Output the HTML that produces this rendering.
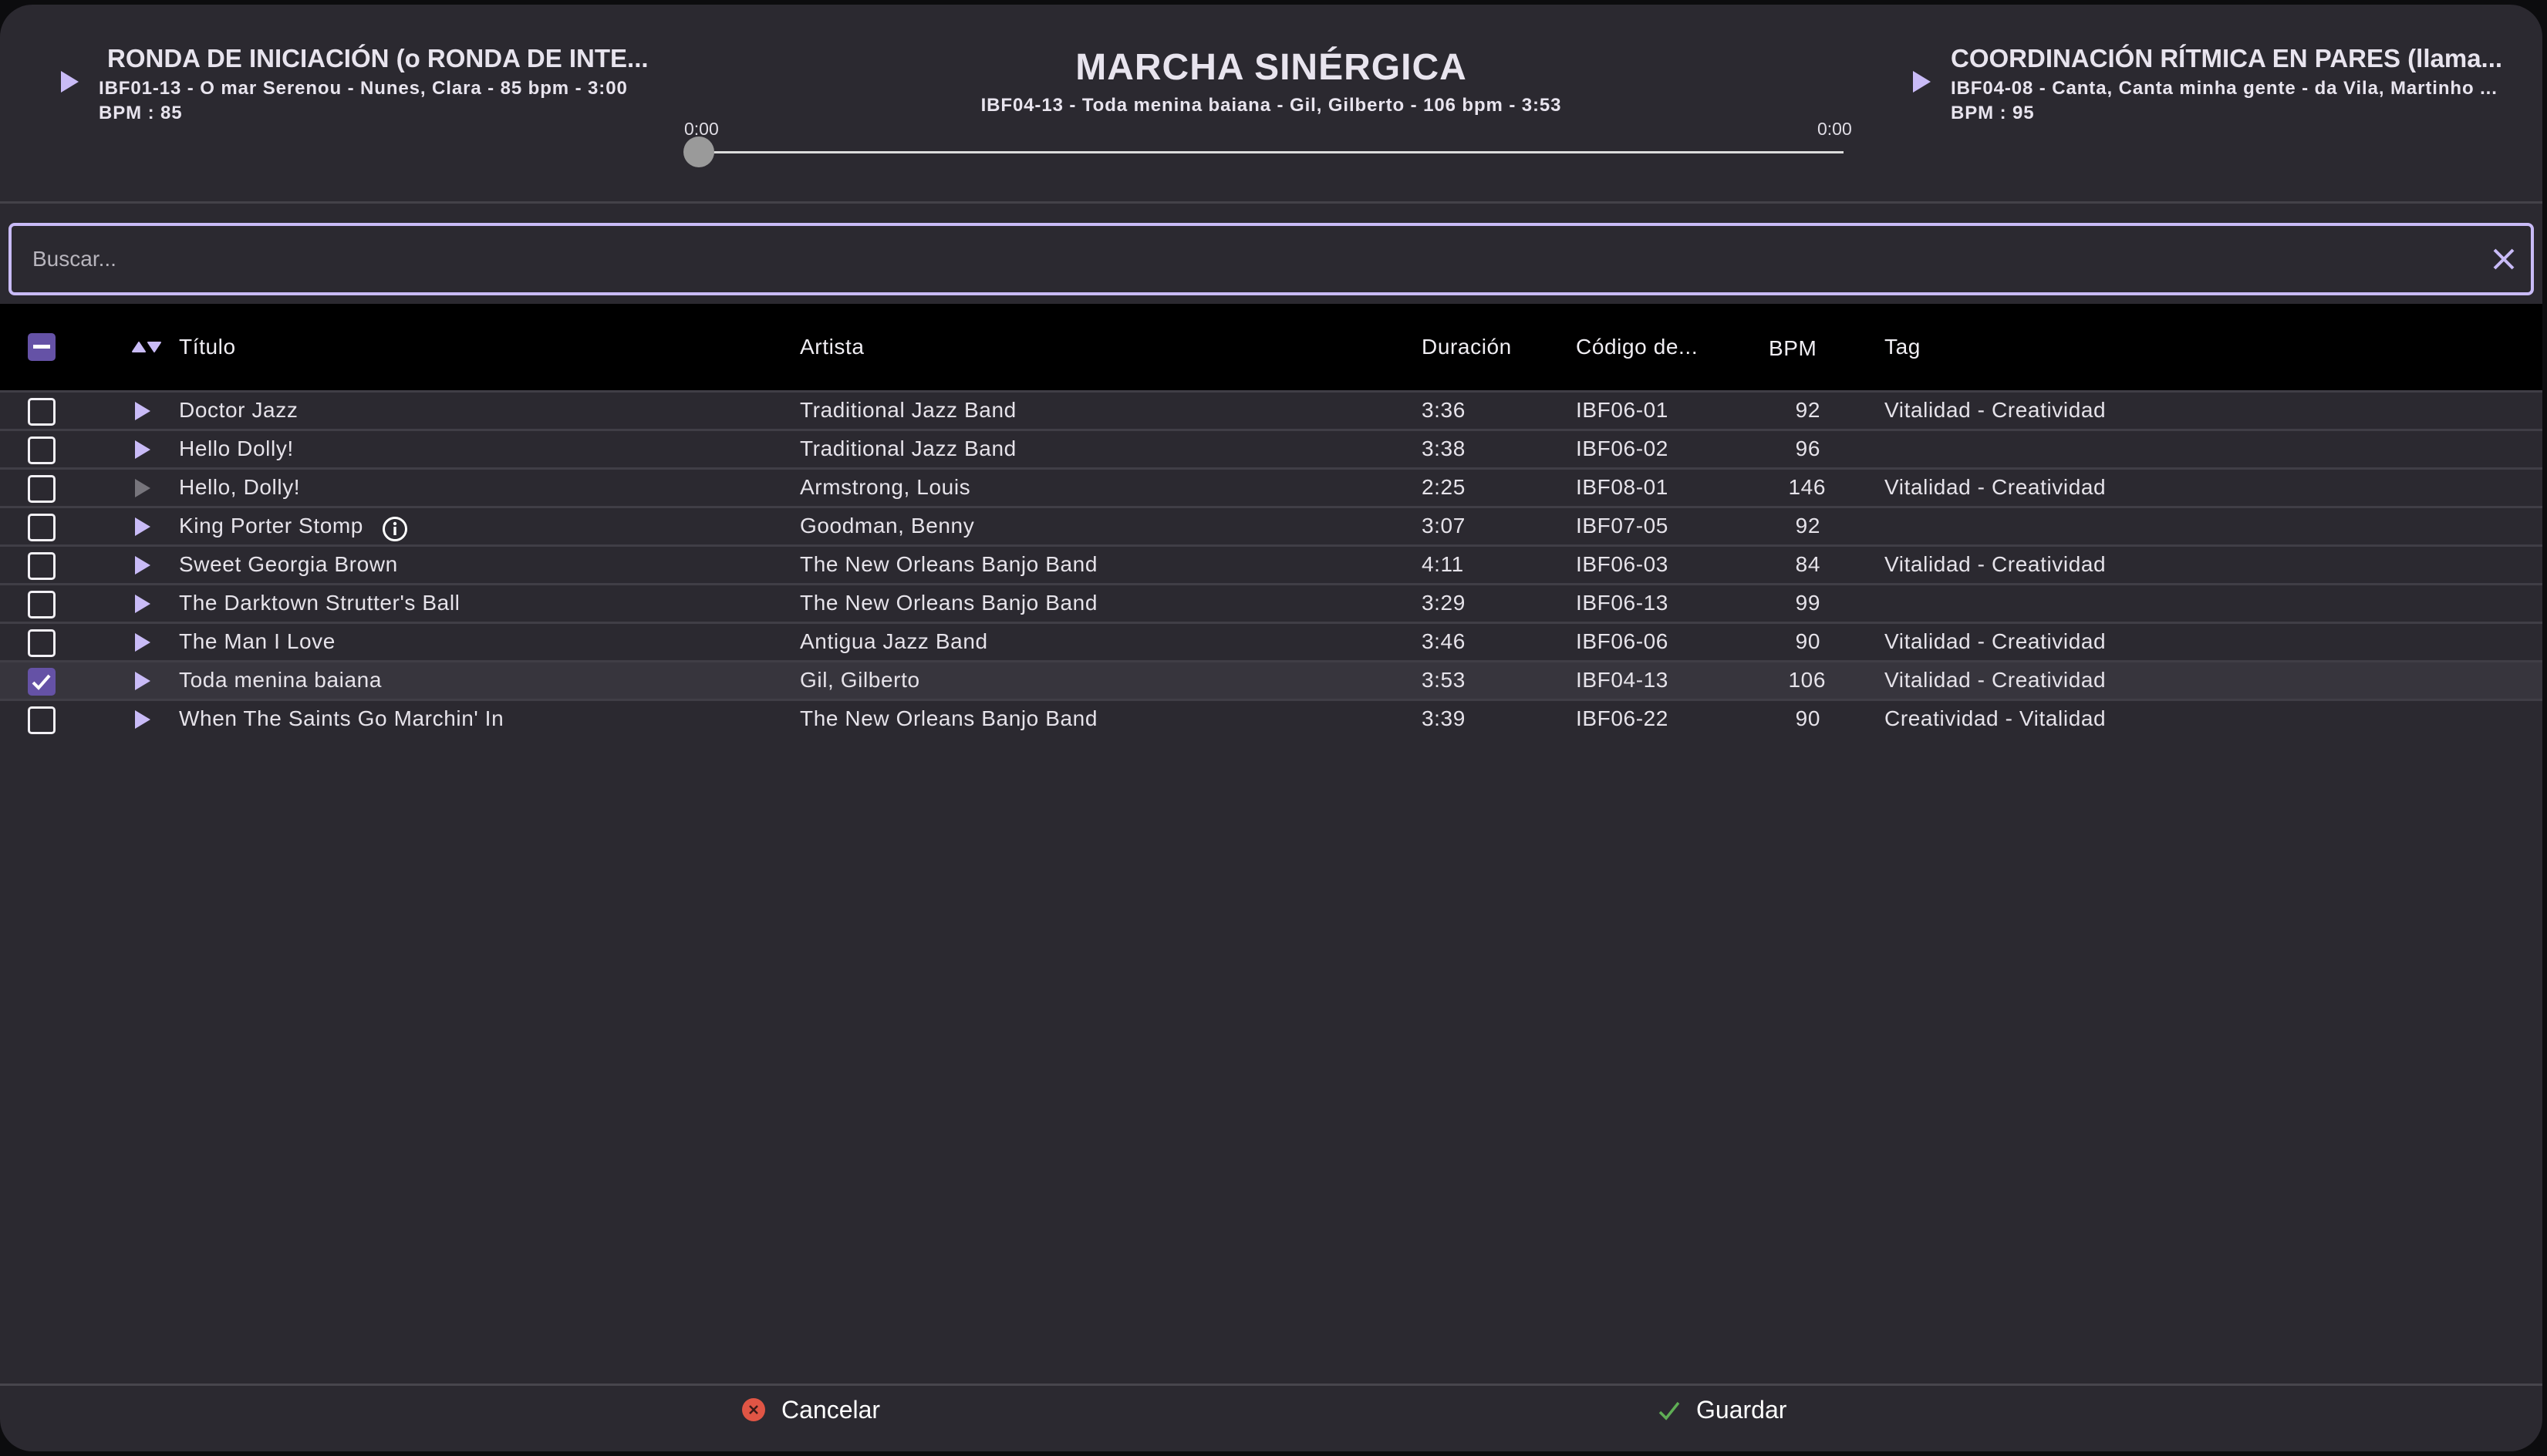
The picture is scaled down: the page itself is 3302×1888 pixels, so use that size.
<!DOCTYPE html>
<html><head><meta charset="utf-8"><style>
*{margin:0;padding:0;box-sizing:border-box}
body{width:3302px;height:1888px;background:#0c0c0e;font-family:"Liberation Sans",sans-serif;overflow:hidden;position:relative}
.modal{position:absolute;left:0;top:6px;width:3296px;height:1876px;background:#2b2930;border-radius:42px;overflow:hidden}
.abs{position:absolute;white-space:nowrap}
.h1{font-weight:bold;font-size:33px;color:#e8e4ee;letter-spacing:0px}
.h2{font-weight:bold;font-size:24px;color:#e8e4ee;letter-spacing:0.9px}
.tri{position:absolute;width:0;height:0;border-top:14px solid transparent;border-bottom:14px solid transparent;border-left:23px solid #c9bbf7}
.row{position:absolute;left:0;width:3296px;height:50px;border-bottom:3px solid #403e46;font-size:28px;color:#e6e3ea;letter-spacing:0.6px}
.row span{position:absolute;top:7px;white-space:nowrap}
.cb{position:absolute;left:36px;top:7px;width:36px;height:36px;border:3px solid #f2f0f5;border-radius:5px}
.pt{position:absolute;left:175px;top:12px;width:0;height:0;border-top:12px solid transparent;border-bottom:12px solid transparent;border-left:20px solid #c9bbf7}
.th{position:absolute;top:40px;font-size:28px;color:#f0eef3;white-space:nowrap;letter-spacing:0.6px}
</style></head><body>
<div class="modal">
  <div class="tri" style="left:79px;top:86px"></div>
  <div class="abs h1" style="left:139px;top:51px">RONDA DE INICIACIÓN (o RONDA DE INTE...</div>
  <div class="abs h2" style="left:128px;top:95px">IBF01-13 - O mar Serenou - Nunes, Clara - 85 bpm - 3:00</div>
  <div class="abs h2" style="left:128px;top:127px">BPM : 85</div>

  <div class="abs" style="left:0;width:3296px;top:54px;text-align:center;font-weight:bold;font-size:48px;color:#e8e4ee;letter-spacing:1px">MARCHA SINÉRGICA</div>
  <div class="abs h2" style="left:0;width:3296px;top:117px;text-align:center">IBF04-13 - Toda menina baiana - Gil, Gilberto - 106 bpm - 3:53</div>

  <div class="abs" style="left:887px;top:148px;font-size:23px;color:#e0dde5">0:00</div>
  <div class="abs" style="left:2356px;top:148px;font-size:23px;color:#e0dde5">0:00</div>
  <div class="abs" style="left:906px;top:190px;width:1484px;height:3px;background:#dcdcdc"></div>
  <div class="abs" style="left:886px;top:171px;width:40px;height:40px;border-radius:50%;background:#9a9a9a"></div>

  <div class="tri" style="left:2480px;top:86px"></div>
  <div class="abs h1" style="left:2529px;top:51px">COORDINACIÓN RÍTMICA EN PARES (llama...</div>
  <div class="abs h2" style="left:2529px;top:95px">IBF04-08 - Canta, Canta minha gente - da Vila, Martinho ...</div>
  <div class="abs h2" style="left:2529px;top:127px">BPM : 95</div>

  <div class="abs" style="left:0;top:255px;width:3296px;height:3px;background:#444249"></div>

  <div class="abs" style="left:11px;top:283px;width:3274px;height:94px;border:4px solid #c9bbf7;border-radius:8px"></div>
  <div class="abs" style="left:42px;top:314px;font-size:28px;color:#b8b5bd">Buscar...</div>
  <svg class="abs" style="left:3230px;top:314px" width="32" height="32" viewBox="0 0 32 32"><path d="M4 4L28 28M28 4L4 28" stroke="#c9bbf7" stroke-width="4"/></svg>

  <div class="abs" style="left:0;top:388px;width:3296px;height:112px;background:#000">
    <div style="position:absolute;left:36px;top:38px;width:36px;height:36px;background:#6552a6;border-radius:5px"><div style="position:absolute;left:7px;top:15px;width:22px;height:5px;background:#fff"></div></div>
    <svg style="position:absolute;left:171px;top:49px" width="40" height="14" viewBox="0 0 40 14"><path d="M1 13L9 1L17 13Z" fill="#c9bbf7" stroke="#c9bbf7" stroke-linejoin="round" stroke-width="2"/><path d="M21 1L37 1L29 13Z" fill="#c9bbf7" stroke="#c9bbf7" stroke-linejoin="round" stroke-width="2"/></svg>
    <div class="th" style="left:232px">Título</div>
    <div class="th" style="left:1037px">Artista</div>
    <div class="th" style="left:1843px">Duración</div>
    <div class="th" style="left:2043px">Código de...</div>
    <div class="th" style="left:2293px;top:42px">BPM</div>
    <div class="th" style="left:2443px">Tag</div>
  </div>
  <div class="abs" style="left:0;top:500px;width:3296px;height:3px;background:#403e46"></div>

  <div style="position:absolute;left:0;top:503px">
    <div class="row" style="top:0"><div class="cb"></div><div class="pt"></div><span style="left:232px">Doctor Jazz</span><span style="left:1037px">Traditional Jazz Band</span><span style="left:1843px">3:36</span><span style="left:2043px">IBF06-01</span><span style="left:2280px;width:80px;text-align:right">92</span><span style="left:2443px">Vitalidad - Creatividad</span></div>
    <div class="row" style="top:50px"><div class="cb"></div><div class="pt"></div><span style="left:232px">Hello Dolly!</span><span style="left:1037px">Traditional Jazz Band</span><span style="left:1843px">3:38</span><span style="left:2043px">IBF06-02</span><span style="left:2280px;width:80px;text-align:right">96</span></div>
    <div class="row" style="top:100px"><div class="cb"></div><div class="pt" style="border-left-color:#77757c"></div><span style="left:232px">Hello, Dolly!</span><span style="left:1037px">Armstrong, Louis</span><span style="left:1843px">2:25</span><span style="left:2043px">IBF08-01</span><span style="left:2280px;width:87px;text-align:right">146</span><span style="left:2443px">Vitalidad - Creatividad</span></div>
    <div class="row" style="top:150px"><div class="cb"></div><div class="pt"></div><span style="left:232px">King Porter Stomp</span><svg style="position:absolute;left:495px;top:10px" width="34" height="34" viewBox="0 0 34 34"><circle cx="17" cy="17" r="14.5" fill="none" stroke="#fff" stroke-width="3"/><circle cx="17" cy="10" r="2.2" fill="#fff"/><rect x="15.3" y="14" width="3.4" height="11" fill="#fff"/></svg><span style="left:1037px">Goodman, Benny</span><span style="left:1843px">3:07</span><span style="left:2043px">IBF07-05</span><span style="left:2280px;width:80px;text-align:right">92</span></div>
    <div class="row" style="top:200px"><div class="cb"></div><div class="pt"></div><span style="left:232px">Sweet Georgia Brown</span><span style="left:1037px">The New Orleans Banjo Band</span><span style="left:1843px">4:11</span><span style="left:2043px">IBF06-03</span><span style="left:2280px;width:80px;text-align:right">84</span><span style="left:2443px">Vitalidad - Creatividad</span></div>
    <div class="row" style="top:250px"><div class="cb"></div><div class="pt"></div><span style="left:232px">The Darktown Strutter's Ball</span><span style="left:1037px">The New Orleans Banjo Band</span><span style="left:1843px">3:29</span><span style="left:2043px">IBF06-13</span><span style="left:2280px;width:80px;text-align:right">99</span></div>
    <div class="row" style="top:300px"><div class="cb"></div><div class="pt"></div><span style="left:232px">The Man I Love</span><span style="left:1037px">Antigua Jazz Band</span><span style="left:1843px">3:46</span><span style="left:2043px">IBF06-06</span><span style="left:2280px;width:80px;text-align:right">90</span><span style="left:2443px">Vitalidad - Creatividad</span></div>
    <div class="row" style="top:350px;background:#37353d"><div class="cb" style="background:#6552a6;border-color:#6552a6"><svg style="position:absolute;left:1px;top:3px" width="28" height="26" viewBox="0 0 28 26"><path d="M3 13L10 20L24 4" fill="none" stroke="#fff" stroke-width="4"/></svg></div><div class="pt"></div><span style="left:232px">Toda menina baiana</span><span style="left:1037px">Gil, Gilberto</span><span style="left:1843px">3:53</span><span style="left:2043px">IBF04-13</span><span style="left:2280px;width:87px;text-align:right">106</span><span style="left:2443px">Vitalidad - Creatividad</span></div>
    <div class="row" style="top:400px;border-bottom:none"><div class="cb"></div><div class="pt"></div><span style="left:232px">When The Saints Go Marchin' In</span><span style="left:1037px">The New Orleans Banjo Band</span><span style="left:1843px">3:39</span><span style="left:2043px">IBF06-22</span><span style="left:2280px;width:80px;text-align:right">90</span><span style="left:2443px">Creatividad - Vitalidad</span></div>
  </div>

  <div class="abs" style="left:0;top:1788px;width:3296px;height:3px;background:#48464d"></div>
  <svg class="abs" style="left:962px;top:1807px" width="30" height="30" viewBox="0 0 30 30"><circle cx="15" cy="15" r="15" fill="#e05545"/><path d="M10 10L20 20M20 10L10 20" stroke="#3a1a18" stroke-width="2.5"/></svg>
  <div class="abs" style="left:1013px;top:1804px;font-size:32px;color:#fff">Cancelar</div>
  <svg class="abs" style="left:2148px;top:1808px" width="32" height="30" viewBox="0 0 32 30"><path d="M4 17L12 25L28 5" fill="none" stroke="#5fae55" stroke-width="3.5"/></svg>
  <div class="abs" style="left:2199px;top:1804px;font-size:32px;color:#fff">Guardar</div>
</div>
</body></html>
